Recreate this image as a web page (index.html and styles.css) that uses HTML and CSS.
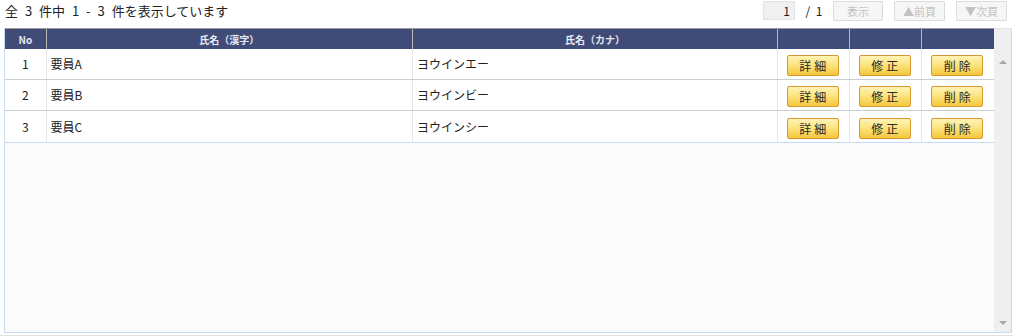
FILE: index.html
```html
<!DOCTYPE html>
<html lang="ja">
<head>
<meta charset="utf-8">
<title>一覧</title>
<link rel="stylesheet" href="styles.css">
</head>
<body>
<div class="toolbar">
  <span class="summary">全 3 件中 1 - 3 件を表示しています</span>
  <div class="pager">
    <span class="page-input">1</span>
    <span class="page-total">/ 1</span>
    <span class="pbtn pbtn-show">表示</span>
    <span class="pbtn pbtn-nav">▲前頁</span>
    <span class="pbtn pbtn-nav">▼次頁</span>
  </div>
</div>
<div class="grid">
  <div class="grid-main">
    <table class="list">
      <colgroup>
        <col class="c-no"><col class="c-kanji"><col class="c-kana"><col class="c-act"><col class="c-act"><col class="c-act">
      </colgroup>
      <thead>
        <tr><th>No</th><th>氏名（漢字）</th><th>氏名（カナ）</th><th></th><th></th><th></th></tr>
      </thead>
      <tbody>
        <tr><td class="no">1</td><td>要員A</td><td>ヨウインエー</td><td class="act"><span class="btn">詳細</span></td><td class="act"><span class="btn">修正</span></td><td class="act"><span class="btn">削除</span></td></tr>
        <tr><td class="no">2</td><td>要員B</td><td>ヨウインビー</td><td class="act"><span class="btn">詳細</span></td><td class="act"><span class="btn">修正</span></td><td class="act"><span class="btn">削除</span></td></tr>
        <tr><td class="no">3</td><td>要員C</td><td>ヨウインシー</td><td class="act"><span class="btn">詳細</span></td><td class="act"><span class="btn">修正</span></td><td class="act"><span class="btn">削除</span></td></tr>
      </tbody>
    </table>
    <div class="filler"></div>
  </div>
  <div class="scrollbar">
    <span class="arrow arrow-up"></span>
    <span class="arrow arrow-down"></span>
  </div>
</div>
<div class="footline"></div>
</body>
</html>
```
FILE: styles.css
```css
html, body {
  margin: 0;
  padding: 0;
  background: #ffffff;
}
body {
  font-family: "Noto Sans CJK JP", "Noto Sans", sans-serif;
  font-size: 12px;
  color: #222222;
  width: 1013px;
  height: 336px;
  overflow: hidden;
}
.toolbar {
  height: 28px;
  display: flex;
  align-items: flex-start;
  justify-content: space-between;
  padding: 0 6px 0 5px;
  box-sizing: border-box;
}
.summary {
  font-size: 13px;
  line-height: 22px;
  word-spacing: 4px;
}
.pager {
  display: flex;
  align-items: flex-start;
  padding-top: 1px;
}
.page-input {
  width: 32px;
  height: 19px;
  box-sizing: border-box;
  background: #f0f0f0;
  border: 1px solid #e2e2e2;
  text-align: right;
  padding-right: 4px;
  line-height: 17px;
  font-size: 12px;
}
.page-total {
  width: 38px;
  text-align: center;
  line-height: 20px;
  word-spacing: 3px;
}
.pbtn {
  height: 20px;
  box-sizing: border-box;
  border: 1px solid #dcdcdc;
  background: #f6f6f6;
  color: #c2c2c2;
  font-size: 11px;
  line-height: 18px;
  text-align: center;
  border-radius: 1px;
}
.pbtn-show {
  width: 50px;
  margin-right: 11px;
}
.pbtn-nav {
  width: 51px;
  margin-right: 11px;
}
.pbtn-nav:last-child {
  margin-right: 0;
}
.grid {
  margin-left: 4px;
  width: 1008px;
  height: 305px;
  box-sizing: border-box;
  border: 1px solid #c9dbf1;
  border-top: none;
  display: flex;
}
.grid-main {
  flex: 1;
  display: flex;
  flex-direction: column;
  background: #fbfbfb;
}
.list {
  border-collapse: collapse;
  table-layout: fixed;
  width: 989px;
  background: #ffffff;
  border-bottom: 1px solid #c9dbf1;
}
.c-no { width: 41px; }
.c-kanji { width: 366px; }
.c-kana { width: 365px; }
.c-act { width: 72px; }
.list th {
  background: #404c77;
  color: #e4e8f2;
  font-size: 10px;
  font-weight: bold;
  height: 20px;
  padding: 0;
  border-top: 1px solid #9a9a9a;
  border-left: 1px solid #b8b8b8;
  text-align: center;
  line-height: 19px;
}
.list th:first-child {
  border-left: none;
}
.list td {
  height: 30px;
  padding: 0 4px;
  border-bottom: 1px solid #c8d2d2;
  border-left: 1px solid #e6e6e6;
  white-space: nowrap;
  font-size: 12px;
  line-height: 30px;
}
.list tbody tr:last-child td {
  border-bottom: none;
  height: 31px;
}
.list td:first-child {
  border-left: none;
}
.list td.no {
  text-align: center;
  padding: 0;
}
.list td.act {
  text-align: center;
  padding: 0 2px 0 0;
}
.btn {
  display: inline-block;
  vertical-align: middle;
  width: 52px;
  height: 21px;
  box-sizing: border-box;
  border: 1px solid #d9972f;
  border-radius: 2px;
  background: linear-gradient(#fff4b8 0%, #fbe27a 50%, #f4c73c 100%);
  color: #2a2a2a;
  font-size: 12px;
  line-height: 19px;
  letter-spacing: 3px;
  text-indent: 3px;
}
.filler {
  flex: 1;
}
.scrollbar {
  width: 17px;
  background: #efefef;
  display: flex;
  flex-direction: column;
  justify-content: space-between;
  align-items: center;
  padding: 31px 0 7px 0;
  border-top: 1px solid #e4e4e4;
}
.arrow {
  width: 0;
  height: 0;
  border-left: 4px solid transparent;
  border-right: 4px solid transparent;
}
.arrow-up {
  border-bottom: 4px solid #a6a6a6;
}
.arrow-down {
  border-top: 4px solid #a6a6a6;
}
.footline {
  margin-top: 2px;
  height: 1px;
  background: #e0e0e0;
}
```
